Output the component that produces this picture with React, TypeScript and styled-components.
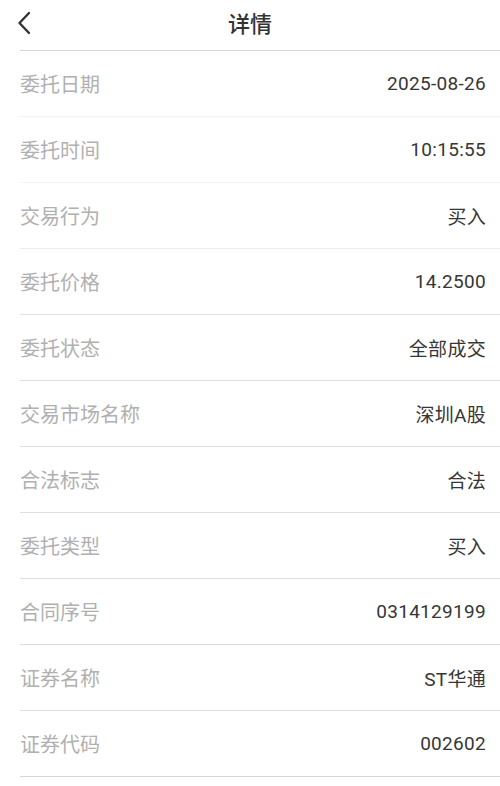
import styled, { createGlobalStyle } from 'styled-components'

const GlobalStyle = createGlobalStyle`
	html, body {
		margin: 0;
		padding: 0;
		background: #fff;
	}
	body {
		font-family: Roboto, 'Noto Sans CJK SC', sans-serif;
		-webkit-font-smoothing: antialiased;
	}
`

const rows: { label: string; value: string; line: string }[] = [
	{ label: '委托日期', value: '2025-08-26', line: '#f3f3f3' },
	{ label: '委托时间', value: '10:15:55', line: '#f3f3f3' },
	{ label: '交易行为', value: '买入', line: '#ebebeb' },
	{ label: '委托价格', value: '14.2500', line: '#e2e2e2' },
	{ label: '委托状态', value: '全部成交', line: '#e0e0e0' },
	{ label: '交易市场名称', value: '深圳A股', line: '#dedede' },
	{ label: '合法标志', value: '合法', line: '#dedede' },
	{ label: '委托类型', value: '买入', line: '#dedede' },
	{ label: '合同序号', value: '0314129199', line: '#dedede' },
	{ label: '证券名称', value: 'ST华通', line: '#dedede' },
	{ label: '证券代码', value: '002602', line: '#d6d6d6' },
]

function App() {
	return (
		<Page>
			<GlobalStyle />
			<Header>
				<BackButton aria-label='返回'>
					<svg width='14' height='24' viewBox='0 0 14 24' fill='none'>
						<path d='M12 2 L2.5 12 L12 22' stroke='#333' strokeWidth='2.4' strokeLinecap='round' strokeLinejoin='round' />
					</svg>
				</BackButton>
				<Title>详情</Title>
			</Header>
			<List>
				{rows.map((row) => (
					<Row key={row.label} $line={row.line}>
						<Label>{row.label}</Label>
						<Value>{row.value}</Value>
					</Row>
				))}
			</List>
		</Page>
	)
}

const Page = styled.div`
	width: 500px;
	min-height: 786px;
	background: #fff;
`

const Header = styled.header`
	position: relative;
	height: 50px;
	display: flex;
	align-items: center;
	justify-content: center;
	padding-bottom: 6px;
	box-sizing: border-box;
`

const BackButton = styled.button`
	position: absolute;
	left: 17px;
	top: 11px;
	border: none;
	background: none;
	padding: 0;
	display: flex;
`

const Title = styled.h1`
	margin: 0;
	font-size: 22px;
	font-weight: 500;
	color: #333;
	font-family: 'Noto Sans CJK SC', sans-serif;
`

const List = styled.div`
	margin-left: 20px;
	border-top: 1px solid #d6d6d6;
`

const Row = styled.div<{ $line: string }>`
	height: 65px;
	display: flex;
	align-items: center;
	justify-content: space-between;
	padding-right: 14px;
	border-bottom: 1px solid ${(p) => p.$line};
`

const Label = styled.span`
	font-size: 20px;
	color: #b0b0b0;
	font-family: 'Noto Sans CJK SC', sans-serif;
`

const Value = styled.span`
	font-size: 19px;
	letter-spacing: 0.3px;
	color: #363636;
	font-family: Roboto, 'Noto Sans CJK SC', sans-serif;
`

export default App
